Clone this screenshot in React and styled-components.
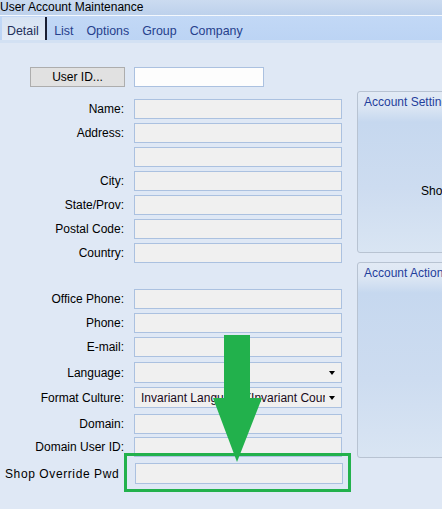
import styled, { createGlobalStyle } from "styled-components";

const GlobalStyle = createGlobalStyle`
  html, body {
    margin: 0;
    padding: 0;
    background: #dfe8f5;
  }
  body {
    font-family: "Liberation Sans", Arial, sans-serif;
    font-size: 12px;
  }
`;

const topRows = [
  { label: "Name:", top: 12 },
  { label: "Address:", top: 4 },
  { label: "", top: 4 },
  { label: "City:", top: 4 },
  { label: "State/Prov:", top: 4 },
  { label: "Postal Code:", top: 4 },
  { label: "Country:", top: 4 },
];

const lowerRows = [
  { label: "Office Phone:", top: 26 },
  { label: "Phone:", top: 4 },
  { label: "E-mail:", top: 4 },
  { label: "Language:", top: 5, combo: true, value: "" },
  { label: "Format Culture:", top: 4, combo: true, value: "Invariant Language (Invariant Country)" },
  { label: "Domain:", top: 6 },
  { label: "Domain User ID:", top: 3 },
  { label: "Shop Override Pwd", top: 6, tall: true, wide: true },
];

const tabs = ["Detail", "List", "Options", "Group", "Company"];

const App = () => {
  const renderRow = (r, i) => (
    <Row key={r.label + i} $top={r.top}>
      <Label $wide={r.wide}>{r.label}</Label>
      {r.combo ? (
        <Combo>
          <ComboText>{r.value}</ComboText>
          <Caret />
        </Combo>
      ) : (
        <TextBox $tall={r.tall} />
      )}
    </Row>
  );

  return (
    <Window>
      <GlobalStyle />
      <TitleBar>User Account Maintenance</TitleBar>
      <TabStrip>
        {tabs.map((t, i) => (
          <Tab key={t} $active={i === 0}>
            {t}
          </Tab>
        ))}
      </TabStrip>
      <TabEdge />
      <Body>
        <Form>
          <Row $top={24}>
            <ButtonCell>
              <UserIdButton>User ID...</UserIdButton>
            </ButtonCell>
            <TextBox $white />
          </Row>
          {topRows.map(renderRow)}
          {lowerRows.map(renderRow)}
        </Form>
        <Side>
          <Group $top={48} $height={162}>
            <GroupTitle>Account Settings</GroupTitle>
            <GroupText $top={75}>Shop Override Pwd</GroupText>
          </Group>
          <Group $top={9} $height={196}>
            <GroupTitle>Account Actions</GroupTitle>
          </Group>
        </Side>
      </Body>
      <Marker width="442" height="509" viewBox="0 0 442 509">
        <rect x="125.5" y="454.5" width="224" height="36" fill="none" stroke="#22b14c" strokeWidth="3" />
        <polygon
          points="224,335 250,335 250,398 262,398 237,462 213,398 224,398"
          fill="#22b14c"
        />
      </Marker>
    </Window>
  );
};
export default App;

const Window = styled.div`
  position: relative;
  width: 442px;
  height: 509px;
  overflow: hidden;
  background: #dfe8f5;
  color: #000;
`;

const TitleBar = styled.div`
  height: 15px;
  line-height: 15px;
  background: linear-gradient(#cbdbf0, #bdd1ec);
  border-bottom: 1px solid #f4f8fd;
  white-space: nowrap;
`;

const TabStrip = styled.div`
  display: flex;
  align-items: stretch;
  height: 24px;
  padding-left: 2px;
  background: linear-gradient(#c2d8f6, #bcd4f4);
`;

const Tab = styled.div`
  display: flex;
  align-items: center;
  padding: 4px ${(p) => (p.$active ? "6px" : "6.5px")} 0 ${(p) => (p.$active ? "5px" : "6.5px")};
  margin-top: 1px;
  font-size: 12.4px;
  color: ${(p) => (p.$active ? "#25305a" : "#26408c")};
  background: ${(p) => (p.$active ? "linear-gradient(#d7e3f3, #e3ebf6)" : "transparent")};
  border-right: ${(p) => (p.$active ? "2px solid #1a1f33" : "none")};
  margin-right: ${(p) => (p.$active ? "1px" : "0")};
  white-space: nowrap;
`;

const TabEdge = styled.div`
  height: 3px;
  background: #d3e1f3;
`;

const Body = styled.div`
  display: flex;
  align-items: flex-start;
`;

const Form = styled.div`
  display: flex;
  flex-direction: column;
  width: 357px;
  flex-shrink: 0;
`;

const Row = styled.div`
  display: grid;
  grid-template-columns: 126px 208px;
  column-gap: 8px;
  align-items: center;
  margin-top: ${(p) => p.$top}px;
`;

const Label = styled.div`
  text-align: ${(p) => (p.$wide ? "left" : "right")};
  padding: ${(p) => (p.$wide ? "0 0 0 5px" : "0 2px 0 0")};
  letter-spacing: ${(p) => (p.$wide ? "0.6px" : "0")};
  white-space: nowrap;
  overflow: hidden;
`;

const ButtonCell = styled.div`
  display: flex;
  justify-content: flex-end;
`;

const UserIdButton = styled.div`
  box-sizing: border-box;
  width: 95px;
  height: 20px;
  margin-right: 1px;
  display: flex;
  align-items: center;
  justify-content: center;
  background: #e1e1e1;
  border: 1px solid #adadad;
  color: #000;
`;

const TextBox = styled.div`
  box-sizing: border-box;
  height: ${(p) => (p.$tall ? 21 : 20)}px;
  width: ${(p) => (p.$white ? 130 : 208)}px;
  background: ${(p) => (p.$white ? "#fdfdfd" : "#f0f0f0")};
  border: 1px solid #abc1e0;
  margin-left: ${(p) => (p.$tall ? 1 : 0)}px;
`;

const Combo = styled.div`
  box-sizing: border-box;
  height: 21px;
  display: flex;
  align-items: center;
  padding: 0 6px;
  background: #f0f0f0;
  border: 1px solid #abc1e0;
`;

const ComboText = styled.div`
  flex: 1;
  overflow: hidden;
  white-space: nowrap;
  color: #1a0a1a;
`;

const Caret = styled.div`
  width: 0;
  height: 0;
  margin-left: 4px;
  border-left: 3.5px solid transparent;
  border-right: 3.5px solid transparent;
  border-top: 4px solid #000;
`;

const Side = styled.div`
  display: flex;
  flex-direction: column;
  flex: 1;
`;

const Group = styled.div`
  box-sizing: border-box;
  width: 160px;
  height: ${(p) => p.$height}px;
  margin-top: ${(p) => p.$top}px;
  border: 1px solid #b8c3d2;
  border-radius: 3px;
  background: linear-gradient(
    #e2eaf5 0px,
    #dae5f3 16px,
    #c6d8ef 30px,
    #cddcf0 60%,
    #d9e5f3 100%
  );
`;

const GroupTitle = styled.div`
  padding: 3px 0 0 6px;
  color: #1f3e9c;
  white-space: nowrap;
`;

const GroupText = styled.div`
  margin-top: ${(p) => p.$top}px;
  padding-left: 63px;
  white-space: nowrap;
`;

const Marker = styled.svg`
  position: absolute;
  left: 0;
  top: 0;
  pointer-events: none;
`;
